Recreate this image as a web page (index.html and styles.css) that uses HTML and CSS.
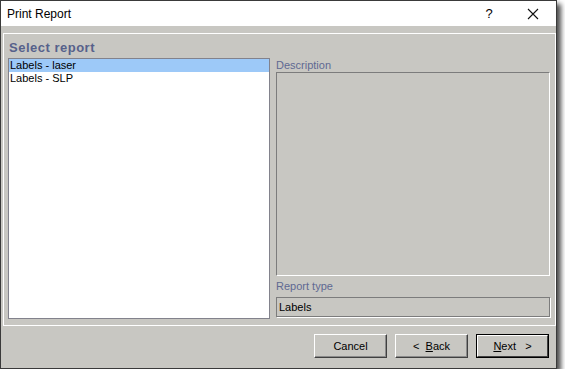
FILE: index.html
```html
<!DOCTYPE html>
<html>
<head>
<meta charset="utf-8" />
<title>Print Report</title>
<link rel="stylesheet" href="styles.css">
</head>
<body>
<div class="window">

    <div class="titlebar">
        <span class="title">Print Report</span>
        <span class="help">?</span>
        <span class="close">
            <svg width="12" height="12" viewBox="0 0 12 12"><path d="M1 1L11 11M11 1L1 11" stroke="#111" stroke-width="1.1" fill="none"/></svg>
        </span>
    </div>

    <div class="content">
        <div class="panel">
            <div class="heading">Select report</div>
            <div class="panel-body">
                <ul class="report-list">
                    <li class="cur">Labels - laser</li>
                    <li>Labels - SLP</li>
                </ul>
                <div class="details">
                    <div class="field-label">Description</div>
                    <div class="desc-box"></div>
                    <div class="field-label field-label2">Report type</div>
                    <div class="type-box">Labels</div>
                </div>
            </div>
        </div>

        <div class="buttons">
            <div class="btn">Cancel</div>
            <div class="btn">&lt;&nbsp;&nbsp;<u>B</u>ack</div>
            <div class="btn btn-default"><span class="btn-in"><u>N</u>ext&nbsp;&nbsp;&nbsp;&gt;</span></div>
        </div>
    </div>

</div>
</body>
</html>
```

FILE: styles.css
```css
body{margin:0;padding:0;background:#fff;font-family:"Liberation Sans",Arial,sans-serif;font-size:11px;color:#000;}
.window{width:557px;height:369px;box-sizing:border-box;border:1px solid #3a3a3a;background:#c8c7c2;box-shadow:4px 4px 5px rgba(0,0,0,.7);display:flex;flex-direction:column;}

.titlebar{height:25px;background:#fff;display:flex;align-items:center;flex-shrink:0;}
.titlebar .title{font-size:12px;padding-left:6px;flex:1;}
.titlebar .help{font-size:13px;width:14px;margin-right:31px;text-align:center;}
.titlebar .close{width:12px;height:12px;margin-right:17px;display:flex;}

.content{flex:1;padding:7px 0 0 2px;display:flex;flex-direction:column;}
.panel{border:1px solid #fff;padding:0 5px 6px 4px;}
.heading{font-size:13px;font-weight:bold;color:#56618b;letter-spacing:.5px;line-height:16px;margin:6px 0 2px 1px;}
.panel-body{display:flex;gap:6px;height:261px;}

.report-list{list-style:none;margin:0;padding:0;width:262px;box-sizing:border-box;background:#fff;border:1px solid #82828c;}
.report-list li{height:13px;line-height:13px;padding-left:1px;}
.report-list li.cur{background:#9dc9f8;}

.details{flex:1;display:flex;flex-direction:column;}
.field-label{color:#5f6992;height:14px;line-height:14px;}
.field-label2{margin:3px 0 4px;}
.desc-box{height:204px;box-sizing:border-box;border:1px solid;border-color:#7c7c7c #fff #fff #7c7c7c;}
.type-box{height:20px;box-sizing:border-box;border:1px solid #7c7c7c;box-shadow:1px 1px 0 #fff;line-height:18px;padding-left:2px;}

.buttons{display:flex;justify-content:flex-end;gap:8px;padding:8px 7px 0 0;}
.btn{width:73px;height:24px;box-sizing:border-box;border:1px solid;border-color:#fff #404040 #404040 #fff;box-shadow:inset -1px -1px 0 #8a8a8a;display:flex;align-items:center;justify-content:center;}
.btn-default{border:1px solid #000;box-shadow:none;}
.btn-default .btn-in{width:100%;height:100%;box-sizing:border-box;border:1px solid;border-color:#fff #404040 #404040 #fff;display:flex;align-items:center;justify-content:center;}
```
